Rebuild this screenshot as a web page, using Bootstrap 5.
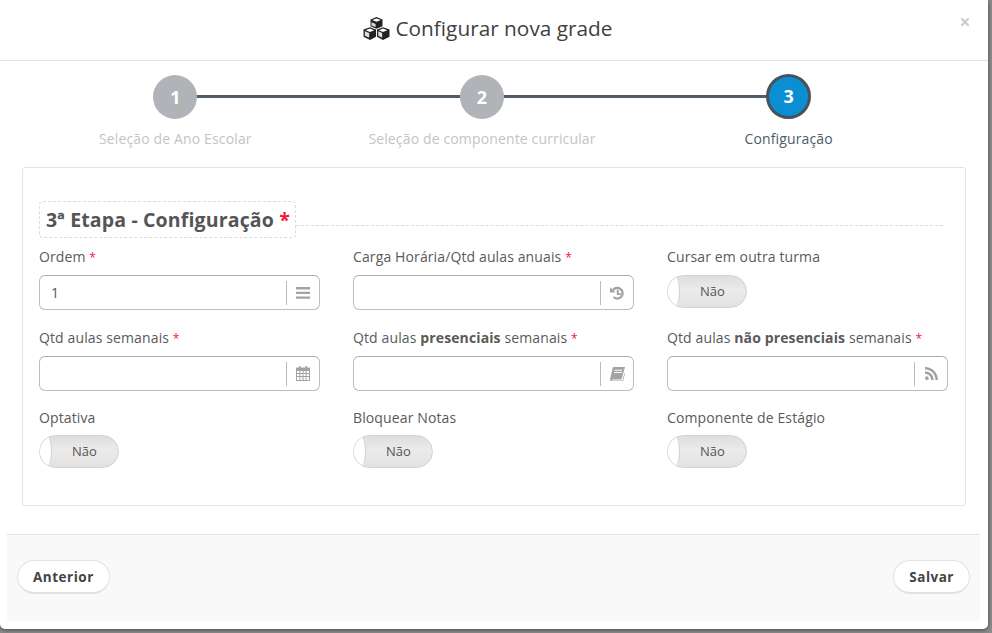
<!DOCTYPE html>
<html lang="pt-BR">
<head>
  <meta charset="UTF-8">
  <meta name="viewport" content="width=device-width, initial-scale=1">
  <title>Configurar nova grade</title>
  <link href="https://cdn.jsdelivr.net/npm/bootstrap@5.3.0/dist/css/bootstrap.min.css" rel="stylesheet">
  <style>
    html, body { height: 633px; overflow: hidden; }
    body { background: #8c8c8c; font-family: "Open Sans", "Liberation Sans", sans-serif; font-size: 14px; color: #555; }
    .sheet { width: 988px; height: 629px; background: #fff; border-radius: 0 0 5px 5px; box-shadow: 0 1px 4px rgba(0,0,0,.5); }
    .sheet-head { height: 61px; border-bottom: 1px solid #e5e5e5; padding: 0 13px 4px 0; }
    .sheet-title { font-size: 20.8px; font-weight: 400; color: #3f3f3f; line-height: 1; margin: 0; gap: 6px; }
    .sheet-close { top: 14px; right: 17px; width: 12px; height: 16px; border: 0; padding: 0; background: none; color: #ccc; font-size: 19px; font-weight: 700; line-height: 16px; }

    .wizard { width: 920px; margin-left: 22px; padding-top: 14px; height: 106px; }
    .wizard-line { top: 34px; left: 153px; width: 613px; height: 3px; background: #525c66; }
    .wizard-step { width: 33.3333%; }
    .wizard-dot { width: 44px; height: 44px; border-radius: 50%; background: #b0b3b8; color: #fff; font-size: 18px; font-weight: 700; line-height: 44px; }
    .wizard-dot.is-on { background: #0b8fd3; border: 3px solid #47525e; line-height: 38px; width: 45px; height: 45px; margin-top: -1px; }
    .wizard-label { font-size: 14px; line-height: 20px; margin-top: 10px; color: #c4c4c4; letter-spacing: .14px; }
    .wizard-label.is-on { color: #4f5b66; }

    .form-box { margin: 0 22px; height: 339px; border: 1px solid #e3e3e3; border-radius: 3px; padding: 33px 17px 0 16px; }
    .legend-row { height: 38px; margin-bottom: 8px; }
    .legend-box { width: 257px; height: 37px; border: 1px dashed #dcdcdc; border-radius: 4px; padding-left: 6px; font-size: 19.5px; line-height: 35px; font-weight: 700; color: #555; white-space: nowrap; letter-spacing: .15px; }
    .legend-rule { width: 647px; border-top: 1px dashed #dcdcdc; margin-top: 24px; }
    .req { color: #f5163b; }

    .form-grid { display: grid; grid-template-columns: repeat(3, 281px); grid-template-rows: 81px 80px 81px; column-gap: 33px; }
    .field-label { display: block; height: 20px; font-size: 14px; line-height: 20px; margin: 0 0 8px; color: #5a5a5a; white-space: nowrap; letter-spacing: .12px; }
    .field-label b { font-weight: 700; }
    .field-label .req { font-size: 12px; line-height: 1; }
    .field-tight .field-label { margin-bottom: 7px; }
    .addon-input { height: 35px; border: 1px solid #bdbdbd; border-top-color: #aaa; border-radius: 6px; padding: 0 0 0 11px; background: #fff; }
    .addon-input input { flex: 1; min-width: 0; border: 0; outline: 0; padding: 0; font: inherit; color: #555; background: transparent; }
    .addon-icon { width: 33px; height: 24px; border-left: 1px solid #bbb; color: #a3a3a3; }
    .addon-icon svg { display: block; fill: currentColor; }

    .toggle-pill { width: 80px; height: 33px; border: 1px solid #d2d2d2; border-radius: 17px; background: linear-gradient(#dedede, #ebebeb 45%, #e2e2e2); overflow: hidden; font-size: 13px; line-height: 31px; color: #555; text-align: center; padding-left: 11px; }
    .toggle-knob { top: -1px; left: -1px; width: 13px; height: 33px; border-radius: 50%; background: #fff; border-right: 1px solid #d0d0d0; }

    .sheet-foot { margin: 28px 8px 0 7px; height: 87px; border-top: 1px solid #e3e3e3; background: #f9f9f9; padding: 25px 10px 0; }
    .btn.pill-btn { height: 34px; padding: 0 15px; border: 1px solid #e2e2e2; border-bottom-width: 2px; border-radius: 17px; background: #fff; color: #444; font-size: 13.5px; font-weight: 700; line-height: 30px; letter-spacing: .5px; }
  </style>
</head>
<body>

<div class="sheet">
  <div class="sheet-head position-relative d-flex align-items-center justify-content-center">
    <h4 class="sheet-title d-flex align-items-center">
      <svg width="27" height="23" viewBox="0 0 27 23" aria-hidden="true">
        <path d="M13.500 0l6 2.400v6.800l-6 2.600-6-2.600V2.400z" fill="#222"/>
        <path d="M9.200 3l4.300 1.700L17.800 3l-4.300-1.600z" fill="#fff"/>
        <path d="M8.500 5.300l4.100 1.600v3.100L8.500 8.400z" fill="#ddd"/>
        <path d="M7 10.200l6 2.400v7.200L7 23l-6.500-3.200v-7.200z" fill="#222"/>
        <path d="M2.600 13.200L7 15l4.200-1.800L7 11.600z" fill="#fff"/>
        <path d="M1.800 14.300l4.400 1.800v4.700l-4.400-2z" fill="#ddd"/>
        <path d="M20 10.200l6.500 2.400v7.200L20 23l-6-3.200v-7.200z" fill="#222"/>
        <path d="M15.800 13.200L20 15l4.400-1.800L20 11.600z" fill="#fff"/>
        <path d="M15.200 14.300l4 1.800v4.700l-4-2z" fill="#ddd"/>
      </svg>
      Configurar nova grade
    </h4>
    <button type="button" class="sheet-close position-absolute" aria-label="Fechar">×</button>
  </div>

  <div class="wizard position-relative d-flex">
    <div class="wizard-line position-absolute"></div>
    <div class="wizard-step position-relative d-flex flex-column align-items-center">
      <div class="wizard-dot text-center">1</div>
      <div class="wizard-label">Seleção de Ano Escolar</div>
    </div>
    <div class="wizard-step position-relative d-flex flex-column align-items-center">
      <div class="wizard-dot text-center">2</div>
      <div class="wizard-label">Seleção de componente curricular</div>
    </div>
    <div class="wizard-step position-relative d-flex flex-column align-items-center">
      <div class="wizard-dot is-on text-center">3</div>
      <div class="wizard-label is-on">Configuração</div>
    </div>
  </div>

  <div class="form-box">
    <div class="legend-row d-flex">
      <div class="legend-box">3ª Etapa - Configuração <span class="req">*</span></div>
      <div class="legend-rule"></div>
    </div>

    <div class="form-grid">
      <div>
        <label class="field-label">Ordem <span class="req">*</span></label>
        <div class="addon-input d-flex align-items-center">
          <input type="text" value="1">
          <span class="addon-icon d-flex align-items-center justify-content-center">
            <svg width="14" height="12" viewBox="0 0 14 12"><path d="M0 0h14v2.400H0zM0 4.700h14v2.400H0zM0 9.400h14v2.400H0z"/></svg>
          </span>
        </div>
      </div>
      <div>
        <label class="field-label">Carga Horária/Qtd aulas anuais <span class="req">*</span></label>
        <div class="addon-input d-flex align-items-center">
          <input type="text">
          <span class="addon-icon d-flex align-items-center justify-content-center">
            <svg width="14" height="14" viewBox="0 0 14 14"><path d="M3 4.200A5.300 5.300 0 1 1 3.600 11" fill="none" stroke="currentColor" stroke-width="2.300"/><path d="M0 1.200l5.600 5.400H0z"/><path d="M6.800 3.800h2v3.400h2.400v1.900H6.800z"/></svg>
          </span>
        </div>
      </div>
      <div>
        <label class="field-label">Cursar em outra turma</label>
        <div class="toggle-pill position-relative"><span class="toggle-knob position-absolute"></span>Não</div>
      </div>

      <div>
        <label class="field-label">Qtd aulas semanais <span class="req">*</span></label>
        <div class="addon-input d-flex align-items-center">
          <input type="text">
          <span class="addon-icon d-flex align-items-center justify-content-center">
            <svg width="14" height="15" viewBox="0 0 14 15"><path fill-rule="evenodd" d="M3 0h1.600v1.600h4.800V0H11v1.600h2c.6 0 1 .4 1 1V14c0 .6-.4 1-1 1H1c-.6 0-1-.4-1-1V2.600c0-.6.4-1 1-1h2zM1 5v2h2.400V5zm3.400 0v2h2.100V5zm3.100 0v2h2.100V5zm3.100 0v2H13V5zM1 8v2h2.400V8zm3.400 0v2h2.100V8zm3.100 0v2h2.100V8zm3.100 0v2H13V8zM1 11v3h2.400v-3zm3.400 0v3h2.100v-3zm3.100 0v3h2.100v-3zm3.100 0v3H13v-3z"/></svg>
          </span>
        </div>
      </div>
      <div>
        <label class="field-label">Qtd aulas <b>presenciais</b> semanais <span class="req">*</span></label>
        <div class="addon-input d-flex align-items-center">
          <input type="text">
          <span class="addon-icon d-flex align-items-center justify-content-center">
            <svg width="15" height="14" viewBox="0 0 15 14"><path d="M3.500 0H15l-.3 1-2.900 10.400c-.2.700-.7 1.100-1.400 1.100H2.200c-.5 0-.8.400-.5.700.2.200.5.300.8.300h9.900l2-7.300.6.500-2.200 8c-.1.200-.2.300-.4.300H2C.8 14.500-.2 13.300.1 12L2.700.8C2.800.300 3.100 0 3.500 0zm1.200 2.800v1h7.500l.3-1zM4.200 5v1h7.500l.3-1z"/></svg>
          </span>
        </div>
      </div>
      <div>
        <label class="field-label">Qtd aulas <b>não presenciais</b> semanais <span class="req">*</span></label>
        <div class="addon-input d-flex align-items-center">
          <input type="text">
          <span class="addon-icon d-flex align-items-center justify-content-center">
            <svg width="13" height="13" viewBox="0 0 12 12"><circle cx="1.700" cy="10.300" r="1.700"/><path d="M0 4c4.400 0 8 3.600 8 8H5.700C5.700 8.900 3.100 6.300 0 6.300z"/><path d="M0 0c6.600 0 12 5.400 12 12H9.700C9.700 6.600 5.400 2.300 0 2.300z"/></svg>
          </span>
        </div>
      </div>

      <div class="field-tight">
        <label class="field-label">Optativa</label>
        <div class="toggle-pill position-relative"><span class="toggle-knob position-absolute"></span>Não</div>
      </div>
      <div class="field-tight">
        <label class="field-label">Bloquear Notas</label>
        <div class="toggle-pill position-relative"><span class="toggle-knob position-absolute"></span>Não</div>
      </div>
      <div class="field-tight">
        <label class="field-label">Componente de Estágio</label>
        <div class="toggle-pill position-relative"><span class="toggle-knob position-absolute"></span>Não</div>
      </div>
    </div>
  </div>

  <div class="sheet-foot d-flex justify-content-between align-items-start">
    <button type="button" class="btn pill-btn">Anterior</button>
    <button type="button" class="btn pill-btn">Salvar</button>
  </div>
</div>

<script src="https://cdn.jsdelivr.net/npm/bootstrap@5.3.0/dist/js/bootstrap.bundle.min.js"></script>
</body>
</html>
